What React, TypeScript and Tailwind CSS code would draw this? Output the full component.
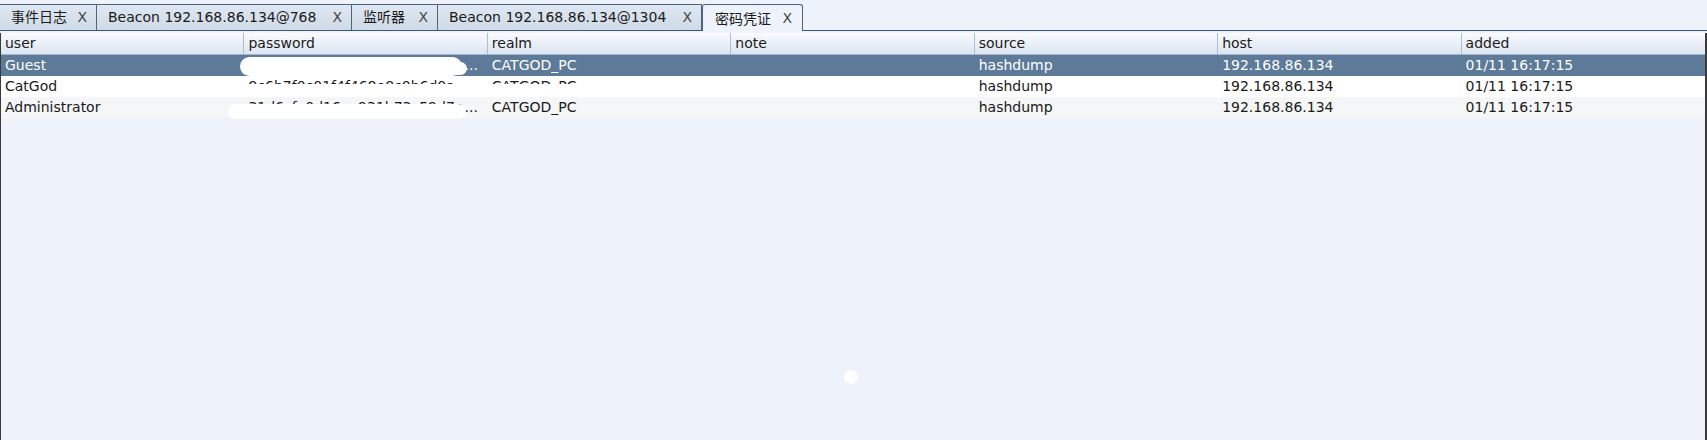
const TABS = [
  { label: '事件日志', w: 'w-[97px]', active: false },
  { label: 'Beacon 192.168.86.134@768', w: 'w-[255px]', active: false },
  { label: '监听器', w: 'w-[86px]', active: false },
  { label: 'Beacon 192.168.86.134@1304', w: 'w-[264px]', active: false },
  { label: '密码凭证', w: 'w-[101px]', active: true },
]

const COLUMNS = ['user', 'password', 'realm', 'note', 'source', 'host', 'added']

// hashes already cut to what fits in the password column
const ROWS = [
  { user: 'Guest', hash: '31d6cfe0d16ae931b73c59d7e', bg: 'bg-[#5d7a99] text-white' },
  { user: 'CatGod', hash: '9c6b7f0c01f4f469e8c0b6d0a', bg: 'bg-white text-[#1a1a1a]' },
  { user: 'Administrator', hash: '31d6cfe0d16ae931b73c59d7e', bg: 'bg-[#f5f6f8] text-[#1a1a1a]' },
]

export default function App() {
  return (
    <div className="relative h-[440px] w-full overflow-hidden bg-[#eef2fa] font-['DejaVu_Sans','Noto_Sans_CJK_SC',sans-serif] text-[14px] text-[#1a1a1a]">
      {/* tab strip */}
      <div className="flex h-[31px] items-end border-b border-[#3d5572]">
        {TABS.map(t =>
          t.active ? (
            <div
              key={t.label}
              className={`${t.w} relative -mb-px flex h-[27px] items-center justify-between rounded-t-[3px] border-x border-t border-[#4d6480] bg-[#eef2fa] pl-[12px] pr-[10px]`}
            >
              <span className="font-['Noto_Sans_CJK_SC',sans-serif]">{t.label}</span>
              <span className="text-[#444]">X</span>
            </div>
          ) : (
            <div
              key={t.label}
              className={`${t.w} flex h-[26px] items-center justify-between border-r border-t border-[#4d6480] bg-gradient-to-b from-[#dfe7f1] to-[#cfdbe8] pl-[11px] pr-[9px]`}
            >
              <span>{t.label}</span>
              <span className="text-[#444]">X</span>
            </div>
          )
        )}
      </div>

      {/* credentials table */}
      <div className="mt-[2px] h-[407px] border-l border-r-2 border-[#3a3a3a]">
        <div className="grid h-[22px] grid-cols-7 border-b border-[#a3b8d0] bg-gradient-to-b from-[#f8fafd] to-[#dde6f2]">
          {COLUMNS.map(c => (
            <div key={c} className="border-r border-[#a9bdd4] pl-[4px] leading-[21px] last:border-r-0">
              {c}
            </div>
          ))}
        </div>
        {ROWS.map(r => (
          <div key={r.user} className={`grid h-[21px] grid-cols-7 leading-[21px] ${r.bg}`}>
            <div className="whitespace-nowrap pl-[4px]">{r.user}</div>
            <div className="flex min-w-0 justify-between whitespace-nowrap pl-[4px] pr-[10px]">
              <span>{r.hash}</span>
              <span>...</span>
            </div>
            <div className="pl-[4px]">CATGOD_PC</div>
            <div />
            <div className="pl-[4px]">hashdump</div>
            <div className="pl-[4px]">192.168.86.134</div>
            <div className="pl-[4px]">01/11 16:17:15</div>
          </div>
        ))}
      </div>

      {/* white redaction strokes */}
      <div className="absolute left-[240px] top-[57px] h-[19px] w-[222px] rounded-full bg-white" />
      <div className="absolute left-[450px] top-[62px] h-[13px] w-[17px] rounded-full bg-white" />
      <div className="absolute left-[238px] top-[84px] h-[13px] w-[362px] bg-white" />
      <div className="absolute left-[228px] top-[104px] h-[15px] w-[238px] rounded-full bg-white" />
      <div className="absolute left-[844px] top-[370px] h-[14px] w-[14px] rounded-full bg-white" />
    </div>
  )
}
